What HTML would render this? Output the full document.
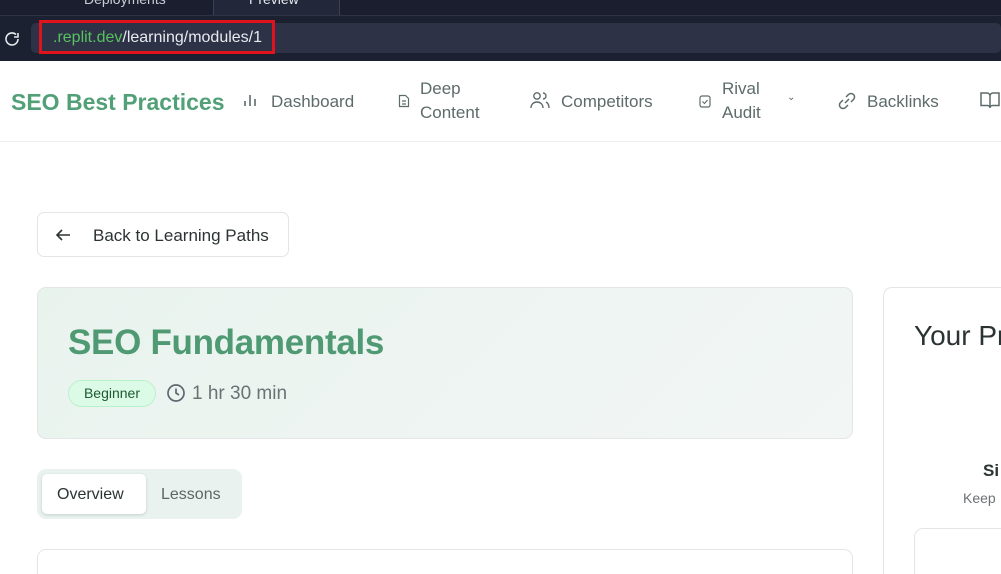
<!DOCTYPE html>
<html style="overflow:hidden;width:1001px;height:574px"><head><style>
*{box-sizing:border-box;margin:0;padding:0}
body{width:1001px;height:574px;overflow:hidden;background:#fff;font-family:"Liberation Sans",sans-serif;position:relative}
.a{position:absolute}
.tabs{left:0;top:0;width:1001px;height:16px;background:#1a1e2e;border-bottom:1px solid #2e3346;overflow:hidden}
.addr{left:0;top:16px;width:1001px;height:45px;background:#1c2131}
.field{left:31px;top:23px;width:970px;height:30px;background:#2d3246;border-radius:5px}
.nav{color:#5d6b6a;font-size:17px}
.card{border:1px solid #e3e6e6;border-radius:9px}
</style></head><body>
<div class="a tabs">
<div class="a" style="left:47px;top:0;width:167px;height:16px;border-right:1px solid #3a3f52"></div>
<div class="a" style="left:214px;top:0;width:126px;height:16px;background:#22273a;border-right:1px solid #3a3f52"></div>
<div class="a" style="left:84px;top:-9px;color:#c9ccd6;font-size:14px">Deployments</div>
<div class="a" style="left:249px;top:-9px;color:#e6e8ee;font-size:14px">Preview</div>
</div>
<div class="a addr"></div>
<div class="a field"></div>
<svg class="a" style="left:2px;top:29px" width="20" height="20" viewBox="0 0 20 20"><path d="M16 10a6 6 0 1 1-2-4.5M16 4v4h-4" fill="none" stroke="#e6e8ee" stroke-width="1.6"/></svg>
<div class="a" style="left:39px;top:20px;width:236px;height:34px;border:3px solid #e0121b"></div>
<div class="a" style="left:53px;top:29px;font-size:16px;color:#e8eaf0"><span style="color:#57c25e">.replit.dev</span>/learning/modules/1</div>
<div class="a" style="left:0;top:141px;width:1001px;height:1px;background:#eceeee"></div>
<div class="a" style="left:11px;top:89px;font-size:23px;font-weight:bold;color:#52a077">SEO Best Practices</div>
<svg class="a" style="left:243px;top:93px" width="14" height="14"><path d="M2 13V8M7 13V2M12 13V6" stroke="#5d6b6a" stroke-width="1.6"/></svg>
<div class="a nav" style="left:271px;top:92px">Dashboard</div>
<svg class="a" style="left:398px;top:94px" width="12" height="14"><path d="M1.5 1.5h6l3 3v8h-9z M4 7h4M4 10h4" fill="none" stroke="#5d6b6a" stroke-width="1.2"/></svg>
<div class="a nav" style="left:420px;top:77px;line-height:24px">Deep<br>Content</div>
<svg class="a" style="left:530px;top:91px" width="20" height="18" viewBox="0 0 20 18"><circle cx="7" cy="5" r="3.2" fill="none" stroke="#5d6b6a" stroke-width="1.4"/><path d="M1 17c0-4 3-6 6-6s6 2 6 6M13 2a3 3 0 0 1 0 6M16 11c2 1 3 3 3 6" fill="none" stroke="#5d6b6a" stroke-width="1.4"/></svg>
<div class="a nav" style="left:561px;top:92px">Competitors</div>
<svg class="a" style="left:699px;top:94px" width="12" height="14"><rect x="1" y="2" width="10" height="11" rx="2" fill="none" stroke="#5d6b6a" stroke-width="1.2"/><path d="M3.5 7.5l2 2 3-3.5" fill="none" stroke="#5d6b6a" stroke-width="1.1"/></svg>
<div class="a nav" style="left:722px;top:77px;line-height:24px">Rival<br>Audit</div>
<div class="a" style="left:787px;top:92px;color:#5d6b6a;font-size:10px">&#8964;</div>
<svg class="a" style="left:837px;top:91px" width="20" height="20" viewBox="0 0 20 20"><path d="M8 12l4-4M6 9l-2.5 2.5a3.3 3.3 0 0 0 5 5L11 14M14 11l2.5-2.5a3.3 3.3 0 0 0-5-5L9 6" fill="none" stroke="#5d6b6a" stroke-width="1.5"/></svg>
<div class="a nav" style="left:867px;top:92px">Backlinks</div>
<svg class="a" style="left:980px;top:91px" width="21" height="18"><path d="M1 2h6a3 3 0 0 1 3 3v12a2.5 2.5 0 0 0-2.5-2.5H1zM19 2h-6a3 3 0 0 0-3 3v12a2.5 2.5 0 0 1 2.5-2.5H19z" fill="none" stroke="#5d6b6a" stroke-width="1.5"/></svg>

<div class="a card" style="left:37px;top:212px;width:252px;height:45px;border-radius:7px"></div>
<svg class="a" style="left:54px;top:226px" width="18" height="18"><path d="M16 9H3M8 4L3 9l5 5" fill="none" stroke="#2b3333" stroke-width="1.6"/></svg>
<div class="a" style="left:93px;top:226px;font-size:17px;color:#2b3333">Back to Learning Paths</div>

<div class="a card" style="left:37px;top:287px;width:816px;height:152px;background:linear-gradient(135deg,#e9f3ee,#f2f6f5)"></div>
<div class="a" style="left:68px;top:323px;font-size:35px;font-weight:bold;color:#4f9a73;letter-spacing:-0.3px">SEO Fundamentals</div>
<div class="a" style="left:68px;top:380px;width:88px;height:27px;border-radius:14px;background:#dcfbe6;border:1px solid #b9f0cc;color:#1d5a31;font-size:14px;text-align:center;line-height:25px">Beginner</div>
<svg class="a" style="left:166px;top:383px" width="20" height="20"><circle cx="10" cy="10" r="8" fill="none" stroke="#5f6770" stroke-width="1.7"/><path d="M10 5.5V10l3 2" fill="none" stroke="#5f6770" stroke-width="1.7"/></svg>
<div class="a" style="left:192px;top:383px;font-size:19px;color:#6b7274">1 hr 30 min</div>

<div class="a" style="left:37px;top:469px;width:205px;height:50px;background:#e9f2ee;border-radius:9px"></div>
<div class="a" style="left:42px;top:474px;width:104px;height:40px;background:#fff;border-radius:5px;box-shadow:0 1px 3px rgba(0,0,0,.15)"></div>
<div class="a" style="left:57px;top:486px;font-size:16px;color:#2b3333">Overview</div>
<div class="a" style="left:161px;top:486px;font-size:16px;color:#5d6665">Lessons</div>
<div class="a card" style="left:37px;top:549px;width:816px;height:40px;border-bottom:none;border-radius:9px 9px 0 0"></div>

<div class="a card" style="left:883px;top:287px;width:130px;height:300px;border-right:none;border-bottom:none;border-radius:9px 0 0 0"></div>
<div class="a" style="left:914px;top:320px;font-size:28px;color:#2b3333;white-space:nowrap">Your Pr</div>
<div class="a" style="left:983px;top:461px;font-size:17px;font-weight:bold;color:#2b3333">Si</div>
<div class="a" style="left:963px;top:490px;font-size:14px;color:#6b7274">Keep</div>
<div class="a card" style="left:914px;top:528px;width:90px;height:60px;border-right:none;border-bottom:none;border-radius:9px 0 0 0"></div>
</body></html>
